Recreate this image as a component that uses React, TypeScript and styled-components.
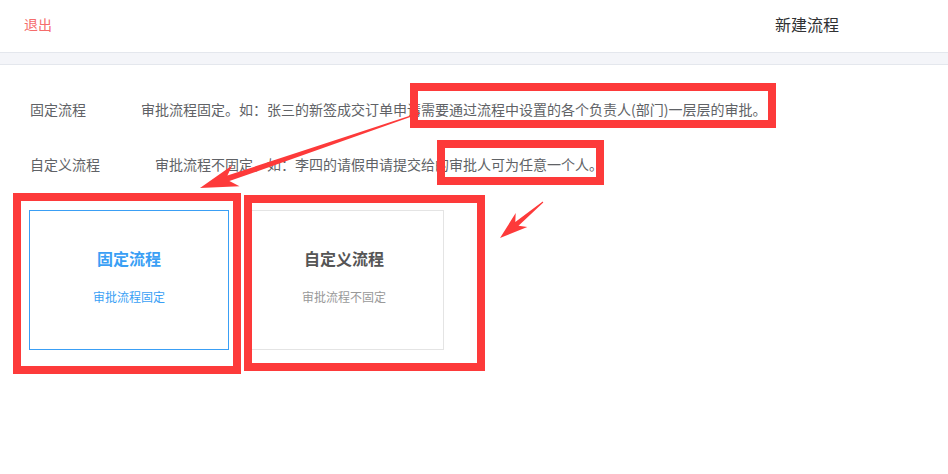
import React from "react";
import styled, { createGlobalStyle } from "styled-components";

const GlobalStyle = createGlobalStyle`
  body {
    margin: 0;
    background: #fff;
    font-family: "Noto Sans CJK SC", "Liberation Sans", sans-serif;
  }
`;

const Page = styled.div`
  position: relative;
  width: 948px;
  height: 474px;
  overflow: hidden;
  background: #fff;
`;

const Header = styled.header`
  height: 53px;
  display: flex;
  align-items: center;
  padding: 0 109px 4px 24px;
  border-bottom: 1px solid #e4e7ed;
  box-sizing: border-box;
`;

const ExitLink = styled.a`
  color: #f56c6c;
  font-size: 14px;
  cursor: pointer;
`;

const PageTitle = styled.h1`
  margin: 0 0 0 auto;
  font-size: 16px;
  font-weight: 400;
  color: #303133;
`;

const Band = styled.div`
  height: 11px;
  background: #f4f5f9;
  border-bottom: 1px solid #e4e7ed;
`;

const Content = styled.main`
  display: flex;
  flex-direction: column;
  gap: 35px;
  padding: 34px 0 0 29px;
`;

const InfoRow = styled.div`
  display: flex;
  align-items: center;
  height: 20px;
  font-size: 14px;
  color: #606266;
  padding-left: 1px;
`;

const InfoLabel = styled.span`
  margin-right: 55px;
`;

const CardRow = styled.div`
  display: flex;
  gap: 15px;
  margin-top: 1px;
`;

const Card = styled.div<{ $active?: boolean }>`
  width: 200px;
  height: 140px;
  box-sizing: border-box;
  border: 1px solid ${(p) => (p.$active ? "#3a9ff5" : "#e4e4e4")};
  display: flex;
  flex-direction: column;
  align-items: center;
  padding-top: 37px;
  cursor: pointer;
`;

const CardTitle = styled.div<{ $active?: boolean }>`
  font-size: 16px;
  line-height: 20px;
  font-weight: 700;
  color: ${(p) => (p.$active ? "#3a9ff5" : "#555")};
`;

const CardDesc = styled.div<{ $active?: boolean }>`
  margin-top: 21px;
  font-size: 12px;
  line-height: 16px;
  color: ${(p) => (p.$active ? "#3a9ff5" : "#999")};
`;

const Mark = styled.div<{ $x: number; $y: number; $w: number; $h: number }>`
  position: absolute;
  left: ${(p) => p.$x}px;
  top: ${(p) => p.$y}px;
  width: ${(p) => p.$w}px;
  height: ${(p) => p.$h}px;
  box-sizing: border-box;
  border: 8px solid #fd3a3a;
  pointer-events: none;
`;

const Arrows = styled.svg`
  position: absolute;
  left: 0;
  top: 0;
  pointer-events: none;
`;

const flows = [
  {
    label: "固定流程",
    desc: "审批流程固定。如：张三的新签成交订单申请需要通过流程中设置的各个负责人(部门)一层层的审批。",
    card: "审批流程固定",
  },
  {
    label: "自定义流程",
    desc: "审批流程不固定。如：李四的请假申请提交给的审批人可为任意一个人。",
    card: "审批流程不固定",
  },
];

const marks = [
  { x: 13, y: 193, w: 228, h: 181 },
  { x: 244, y: 195, w: 241, h: 176 },
  { x: 410, y: 83, w: 366, h: 45 },
  { x: 437, y: 140, w: 167, h: 45 },
];

const App = () => {
  return (
    <Page>
      <GlobalStyle />
      <Header>
        <ExitLink>退出</ExitLink>
        <PageTitle>新建流程</PageTitle>
      </Header>
      <Band />
      <Content>
        {flows.map((f) => (
          <InfoRow key={f.label}>
            <InfoLabel>{f.label}</InfoLabel>
            {f.desc}
          </InfoRow>
        ))}
        <CardRow>
          {flows.map((f, i) => (
            <Card key={f.label} $active={i === 0}>
              <CardTitle $active={i === 0}>{f.label}</CardTitle>
              <CardDesc $active={i === 0}>{f.card}</CardDesc>
            </Card>
          ))}
        </CardRow>
      </Content>

      {marks.map((m, i) => (
        <Mark key={i} $x={m.x} $y={m.y} $w={m.w} $h={m.h} />
      ))}
      <Arrows width="948" height="474" viewBox="0 0 948 474">
        <polygon
          fill="#fd3a3a"
          points="419.8,112.5 227.4,175.5 232.4,165.3 200,188 239.5,186.2 229.4,181.1 420.2,113.5"
        />
        <polygon
          fill="#fd3a3a"
          points="542.7,201.6 515.3,222 515.7,213.1 500,238 527.3,226.9 518.5,225.8 543.3,202.4"
        />
      </Arrows>
    </Page>
  );
};

export default App;
